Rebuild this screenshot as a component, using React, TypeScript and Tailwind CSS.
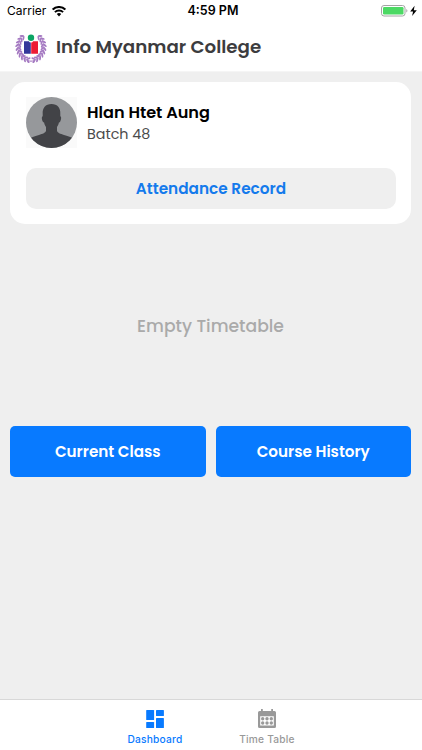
const poppins = "font-['Poppins','Inter',sans-serif]";

function WifiIcon() {
  return (
    <svg className="ml-[6px] h-[11px] w-[14px]" viewBox="0 0 14 11" fill="none" stroke="#000">
      <path d="M.7 3.600a9 9 0 0 1 12.600 0" strokeWidth="2.100" />
      <path d="M2.900 6.200a5.800 5.800 0 0 1 8.200 0" strokeWidth="1.900" />
      <path d="M7 10.400 4.800 8.100a3.200 3.200 0 0 1 4.400 0z" fill="#000" stroke="none" />
    </svg>
  );
}

function Battery() {
  return (
    <svg className="h-[13px] w-[38px]" viewBox="0 0 38 13">
      <rect x=".5" y=".5" width="23.500" height="10.500" rx="2.500" fill="#fff" stroke="#a4a4a4" />
      <rect x="2" y="2" width="20.500" height="7.500" rx="1.200" fill="#4cd964" />
      <path d="M25.300 4c1.500.5 1.500 3 0 3.500z" fill="#a4a4a4" />
      <path d="M33.600.8 29.200 6.500h2.900l-1 4.500 4.700-5.700h-3z" fill="#000" />
    </svg>
  );
}

const leaves = [-166, -152, -138, -124, -110, -96, -82, -68, -54, -40];

function Logo() {
  return (
    <svg className="h-8 w-8" viewBox="0 0 32 32">
      {[1, -1].map((side) => (
        <g key={side} transform={side === 1 ? undefined : "matrix(-1 0 0 1 32 0)"}>
          <path d="M17.500 30.500C8 29 3.200 23 3.200 16.500 3.200 11 5 7 8 4" fill="none" stroke="#b48dca" strokeWidth=".8" />
          {leaves.map((angle) => (
            <g key={angle} transform={`translate(16 16) scale(1 1.050) rotate(${angle})`} fill="#a57ac2">
              <ellipse cx="-.3" cy="-13.900" rx="2.300" ry=".95" transform="rotate(42 -.3 -13.900)" />
              <ellipse cx="-.3" cy="-11.300" rx="2.200" ry=".9" transform="rotate(-38 -.3 -11.300)" />
            </g>
          ))}
        </g>
      ))}
      <circle cx="16" cy="16" r="9.200" fill="#fff" />
      <circle cx="16" cy="6.700" r="3.200" fill="#0ba564" />
      <path d="M9 10.200h4.800q.6 1.200 2 1.300v11.200H9z" fill="#34389a" />
      <path d="M23 10.200h-4.800q-.6 1.200-2 1.300v11.200H23z" fill="#ed1c35" />
    </svg>
  );
}

function Avatar() {
  return (
    <svg className="h-[51px] w-[51px] bg-[#fafafa]" viewBox="0 0 51 51">
      <defs>
        <clipPath id="avatar-clip">
          <circle cx="25.500" cy="25.500" r="25.500" />
        </clipPath>
      </defs>
      <g clipPath="url(#avatar-clip)">
        <rect width="51" height="51" fill="#96989b" />
        <path
          d="M25.500 7c-6 0-9.200 4-8.800 10v2.200c-1.300.2-1 3.500.2 5.600.4.7.9.6 1.200.7.4 2 1 3.300 1.900 4.400v3.600c0 2.300-3.500 3.300-7 4.500-3.500 1.200-6.500 2-8.500 3V51h42V41c-2-1-5-1.800-8.500-3-3.500-1.200-7-2.200-7-4.500v-3.600c.9-1.100 1.500-2.400 1.900-4.400.3-.1.8 0 1.200-.7 1.200-2.100 1.500-5.400.2-5.600V17c.4-6-2.800-10-8.800-10z"
          fill="#424347"
        />
      </g>
    </svg>
  );
}

function DashboardIcon() {
  return (
    <svg className="h-[18px] w-[18px]" viewBox="0 0 18 18" fill="currentColor">
      <rect x=".2" width="7.900" height="10" rx=".6" />
      <rect x=".2" y="12" width="7.900" height="6" rx=".6" />
      <rect x="10" width="7.900" height="6" rx=".6" />
      <rect x="10" y="8" width="7.900" height="10" rx=".6" />
    </svg>
  );
}

function CalendarIcon() {
  return (
    <svg className="h-[19px] w-[18px]" viewBox="0 0 18 19" fill="currentColor">
      <path
        fillRule="evenodd"
        d="M3 0h1.800v2h8.400V0H15v2h1.500A1.500 1.500 0 0 1 18 3.500v14a1.500 1.500 0 0 1-1.500 1.500h-15A1.500 1.500 0 0 1 0 17.500v-14A1.500 1.500 0 0 1 1.500 2H3zM2.200 7.200v9.300h13.600V7.200z"
      />
      {[9.700, 14].map((y) => [4.700, 9, 13.300].map((x) => <circle key={`${x}-${y}`} cx={x} cy={y} r="1.700" />))}
    </svg>
  );
}

const tabs = [
  { label: "Dashboard", icon: DashboardIcon, color: "text-[#087aff]" },
  { label: "Time Table", icon: CalendarIcon, color: "text-[#999999]" },
];

export default function App() {
  return (
    <div className="flex h-[750px] w-[422px] flex-col overflow-hidden bg-[#efefef] font-['Inter',sans-serif]">
      <header className="h-[72px] shrink-0 border-b border-[#f5f5f5] bg-white">
        <div className="grid h-[22px] grid-cols-3 items-center pr-[3px] pl-[7px]">
          <div className="flex items-center text-[12px] text-black">
            <span>Carrier</span>
            <WifiIcon />
          </div>
          <span className="pt-px text-center text-[12.500px] font-semibold text-black">4:59 PM</span>
          <div className="flex justify-end">
            <Battery />
          </div>
        </div>
        <div className="flex h-[49px] items-center pl-[15px]">
          <Logo />
          <h1 className={`ml-[9px] text-[18.250px] font-semibold whitespace-nowrap text-[#3c3c3e] ${poppins}`}>
            Info Myanmar College
          </h1>
        </div>
      </header>

      <main className={`flex flex-1 flex-col pt-[10px] pr-[11px] pl-[10px] ${poppins}`}>
        <section className="h-[142px] rounded-[15px] bg-white pt-[15px] pr-[15px] pl-[16px]">
          <div className="flex">
            <Avatar />
            <div className="ml-[10px] pt-[4px]">
              <h2 className="text-[16.100px] leading-[23px] font-semibold text-black">Hlan Htet Aung</h2>
              <p className="text-[14.300px] leading-[20px] text-[#4b4b4b]">Batch 48</p>
            </div>
          </div>
          <button className="mt-[20px] h-[41px] w-full rounded-[10px] bg-[#efefef] pt-[2px] text-[15.300px] font-semibold text-[#147aec]">
            Attendance Record
          </button>
        </section>

        <div className="flex h-[202px] items-center justify-center pt-[3px] text-[17.200px] font-medium text-[#aaaaaa]">
          <p>Empty Timetable</p>
        </div>

        <div className="grid grid-cols-2 gap-[10px]">
          <button className="h-[51px] rounded-[5px] bg-[#087aff] pt-[2px] text-[15.200px] font-semibold text-white">
            Current Class
          </button>
          <button className="h-[51px] rounded-[5px] bg-[#087aff] pt-[2px] text-[15.200px] font-semibold text-white">
            Course History
          </button>
        </div>
      </main>

      <nav className="flex h-[51px] shrink-0 justify-center border-t border-[#d8d8d8] bg-white">
        {tabs.map((tab) => {
          const Icon = tab.icon;

          return (
            <div key={tab.label} className={`flex w-[112px] flex-col items-center pt-[9px] ${tab.color}`}>
              <div className="flex h-[19px] items-center">
                <Icon />
              </div>
              <span className="mt-[4px] text-[10.200px] leading-[14px] font-medium tracking-[0.2px]">{tab.label}</span>
            </div>
          );
        })}
      </nav>
    </div>
  );
}
